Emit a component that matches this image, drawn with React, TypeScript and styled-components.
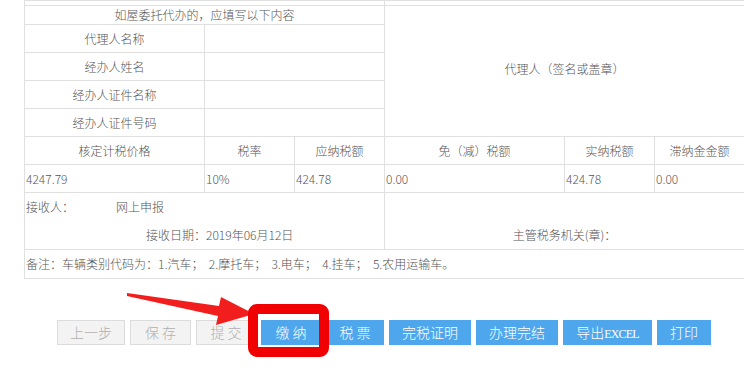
import styled, { createGlobalStyle } from "styled-components";

const GlobalStyle = createGlobalStyle`
  html, body {
    margin: 0;
    padding: 0;
    background: #fff;
  }
  body {
    font-family: "Noto Sans CJK SC", "Noto Sans", sans-serif;
    font-size: 12px;
    color: #555;
  }
`;

const Page = styled.div`
  position: relative;
  width: 744px;
  height: 378px;
  overflow: hidden;
`;

const Table = styled.table`
  margin-left: 24px;
  width: 721px;
  border-collapse: collapse;
  table-layout: fixed;
  td {
    border: 1px solid #e0e0e0;
    padding: 0;
    line-height: 16px;
    color: #555;
    font-weight: 300;
  }
`;

const Row = styled.tr<{ $h: number }>`
  td {
    height: ${(p) => p.$h}px;
  }
`;

const Center = styled.td`
  text-align: center;
`;

const Left = styled.td`
  text-align: left;
  padding-left: 1px !important;
`;

const Line = styled.div<{ $indent?: number; $center?: boolean }>`
  height: 28px;
  line-height: 28px;
  padding-left: ${(p) => p.$indent ?? 0}px;
  text-align: ${(p) => (p.$center ? "center" : "left")};
`;

const Label = styled.span`
  display: inline-block;
  width: 90px;
`;

const Note = styled.span`
  white-space: pre;
`;

const Bar = styled.div`
  margin: 41px 0 0 24px;
  width: 720px;
  display: flex;
  justify-content: center;
  gap: 5px;
`;

const Button = styled.button<{ $w: number; $active?: boolean }>`
  width: ${(p) => p.$w}px;
  height: 25px;
  padding: 0;
  border: 1px solid ${(p) => (p.$active ? "#4ea7ec" : "#dcdcdc")};
  background: ${(p) => (p.$active ? "#4ea7ec" : "#f3f3f3")};
  color: ${(p) => (p.$active ? "#fff" : "#b0b0b0")};
  font-family: "Noto Sans CJK SC", sans-serif;
  font-size: 14px;
  font-weight: 300;
  line-height: 23px;
  white-space: pre;
`;

const Excel = styled.span`
  font-family: "Liberation Serif", serif;
  font-size: 12px;
  font-weight: 400;
  letter-spacing: -0.8px;
`;

const Overlay = styled.svg`
  position: absolute;
  left: 0;
  top: 0;
  pointer-events: none;
`;

export default function App() {
  return (
    <Page>
      <GlobalStyle />
      <Table>
        <colgroup>
          <col style={{ width: 180 }} />
          <col style={{ width: 90 }} />
          <col style={{ width: 90 }} />
          <col style={{ width: 180 }} />
          <col style={{ width: 90 }} />
          <col style={{ width: 90 }} />
        </colgroup>
        <tbody>
          <Row $h={4}>
            <td colSpan={3} />
            <td colSpan={3} />
          </Row>
          <Row $h={18}>
            <Center colSpan={3}>如屋委托代办的，应填写以下内容</Center>
            <Center colSpan={3} rowSpan={5} style={{ height: "auto", paddingBottom: 4 }}>
              代理人（签名或盖章）
            </Center>
          </Row>
          {["代理人名称", "经办人姓名", "经办人证件名称", "经办人证件号码"].map((t) => (
            <Row $h={27} key={t}>
              <Center>{t}</Center>
              <td colSpan={2} />
            </Row>
          ))}
          <Row $h={27}>
            <Center>核定计税价格</Center>
            <Center>税率</Center>
            <Center>应纳税额</Center>
            <Center>免（减）税额</Center>
            <Center>实纳税额</Center>
            <Center>滞纳金金额</Center>
          </Row>
          <Row $h={27}>
            <Left>4247.79</Left>
            <Left>10%</Left>
            <Left>424.78</Left>
            <Left>0.00</Left>
            <Left>424.78</Left>
            <Left>0.00</Left>
          </Row>
          <Row $h={55}>
            <Left colSpan={3}>
              <Line>
                <Label>接收人：</Label>网上申报
              </Line>
              <Line $indent={120}>接收日期：2019年06月12日</Line>
            </Left>
            <Center colSpan={3}>
              <Line />
              <Line $center>主管税务机关(章)：</Line>
            </Center>
          </Row>
          <Row $h={28}>
            <Left colSpan={6}>
              <Note>备注：车辆类别代码为：1.汽车；  2.摩托车；  3.电车；  4.挂车；  5.农用运输车。</Note>
            </Left>
          </Row>
        </tbody>
      </Table>
      <Bar>
        <Button $w={68}>上一步</Button>
        <Button $w={61}>保 存</Button>
        <Button $w={60}>提 交</Button>
        <Button $w={60} $active>缴 纳</Button>
        <Button $w={58} $active>税 票</Button>
        <Button $w={82} $active>完税证明</Button>
        <Button $w={82} $active>办理完结</Button>
        <Button $w={89} $active>
          导出<Excel>EXCEL</Excel>
        </Button>
        <Button $w={54} $active>打印</Button>
      </Bar>
      <Overlay width="744" height="378" viewBox="0 0 744 378">
        <polygon
          points="127,293 219,306 221,297 254,314 216,325 218,316 127,296"
          fill="#f21d1d"
        />
        <rect x="253" y="309" width="71" height="43" rx="4" fill="none" stroke="#f00000" strokeWidth="10" />
      </Overlay>
    </Page>
  );
}
